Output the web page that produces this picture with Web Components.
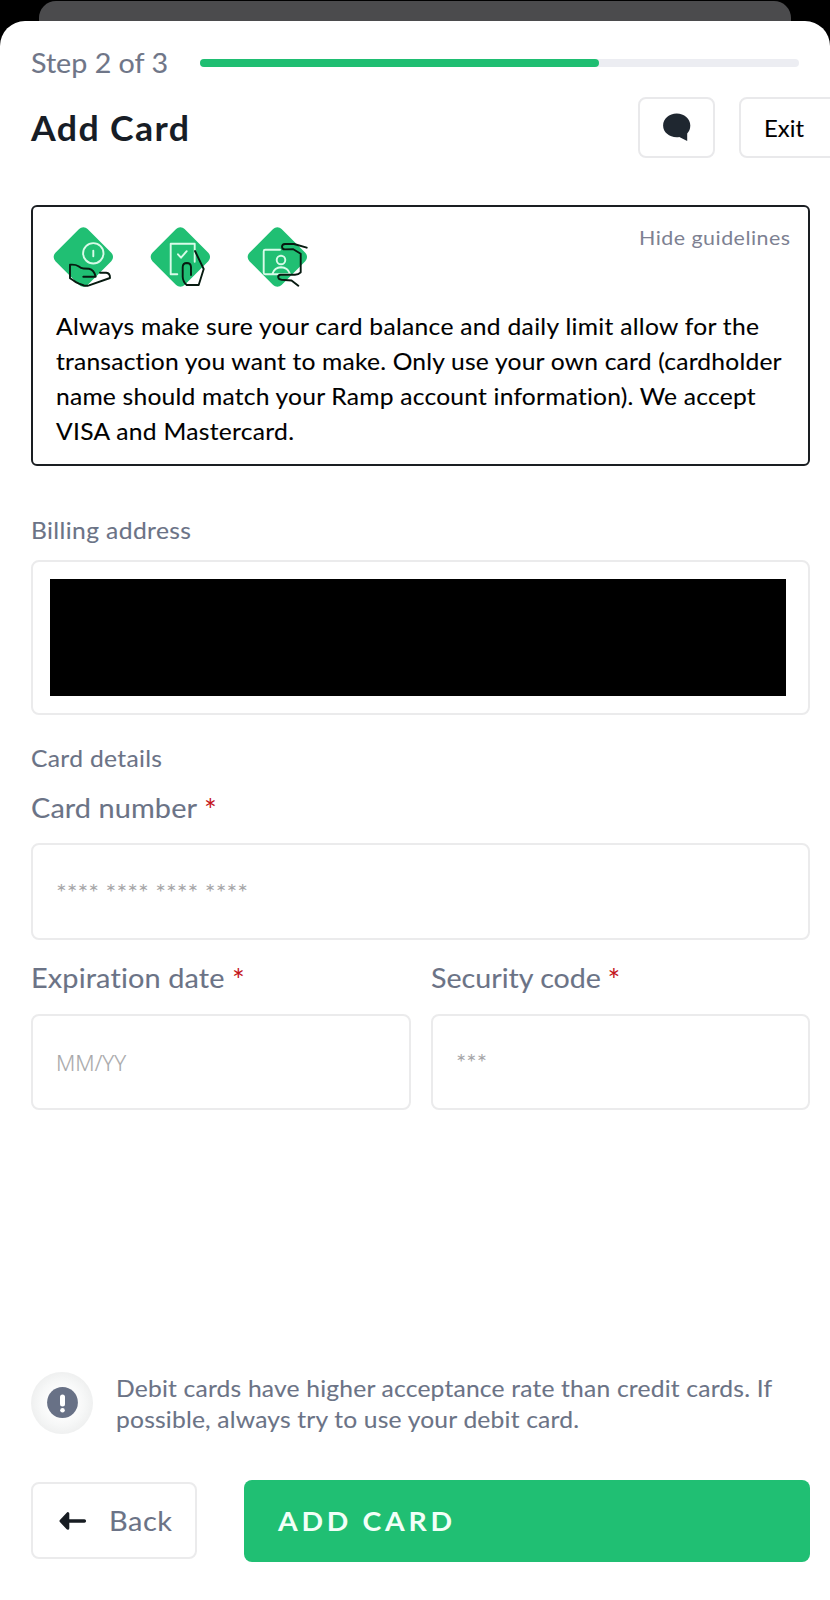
<!DOCTYPE html>
<html lang="en">
<head>
<meta charset="utf-8">
<title>Add Card</title>
<style>
  html, body { margin: 0; background: #000; }
  body { width: 830px; height: 1600px; overflow: hidden; font-family: Lato, "Open Sans", sans-serif; color: #6b7386; }
</style>
</head>
<body>
<add-card-page></add-card-page>
<script>
function define(name, html, setup) {
  customElements.define(name, class extends HTMLElement {
    constructor() {
      super();
      const t = document.createElement('template');
      t.innerHTML = html;
      this.attachShadow({ mode: 'open' }).append(t.content.cloneNode(true));
    }
    connectedCallback() { if (setup) setup(this, this.shadowRoot); }
  });
}

/* One line of text that spans the width given in "w": the letters are
   widened by up to "max" (7% by default), and tracking takes the rest. */
define('fit-text', `<style>
  :host { display: block; white-space: pre; flex: none; }
  span { display: inline-block; transform-origin: 0 50%; -webkit-text-stroke: var(--stroke, .1px) currentColor; }
</style><span><slot></slot></span>`, (el, root) => {
  const span = root.querySelector('span');
  const n = el.textContent.length - 1;
  const w = parseFloat(el.getAttribute('w'));
  const natural = span.getBoundingClientRect().width;
  const max = parseFloat(el.getAttribute('max') || '1.07');
  const scale = Math.max(1, Math.min(max, w / natural));
  const gap = (w / scale - natural) / n;
  span.style.letterSpacing = gap.toFixed(3) + 'px';
  span.style.transform = 'scaleX(' + scale.toFixed(4) + ')';
  el.style.width = w + 'px';
});

define('step-progress', `<style>
  :host { display: flex; align-items: center; height: 34px; padding-right: 11px; }
  .step { font-size: 27px; line-height: 34px; color: #6f7688; margin-right: 32px; }
  .track { flex: 1; height: 8px; border-radius: 4px; background: #ecedf2; }
  .fill { width: 66.6%; height: 8px; border-radius: 4px; background: #1fbe72; }
</style><fit-text class="step" w="137">Step 2 of 3</fit-text><div class="track"><div class="fill"></div></div>`);

define('sheet-header', `<style>
  :host { display: flex; height: 61px; margin: 16.500px -40px 0 0; }
  .title { font-size: 34px; font-weight: 700; line-height: 61px; color: #171d26; flex: 1; --stroke: 0; }
  .btn { box-sizing: border-box; height: 61px; border: 2px solid #e9e9eb; border-radius: 8px; background: #fff; display: flex; align-items: center; }
  .chat { width: 77px; margin-right: 24px; justify-content: center; }
  .exit { width: 111px; padding: 1px 0 0 23px; color: #000; font-size: 23px; }
  svg { display: block; }
</style>
<div class="title"><fit-text w="158" max="1.05">Add Card</fit-text></div>
<div class="btn chat"><svg width="30" height="30" viewBox="0 0 30 30"><path d="M14.700 1.600C7.200 1.600 1.100 6.900 1.100 13.600S7.200 25.300 14.700 25.300c1 0 1.800-.1 2.600-.3l7.900 4.100V21.600c2-2 3.100-4.700 3.100-8C28.300 6.900 22.200 1.600 14.700 1.600Z" fill="#1f2730"/></svg></div>
<div class="btn exit"><fit-text w="40">Exit</fit-text></div>`);

const diamond = '<rect x="9.100" y="9.300" width="45.500" height="45.500" rx="6" transform="rotate(45 31.850 32.050)" fill="#20bf73"/>';
const art = {
  balance: '<g stroke="#d9fbe9"><circle cx="41.800" cy="28.300" r="10.200"/><path d="M41.800 25.700v5.500"/></g><path stroke="#071a10" d="M48.500 47.700h6.200q4 .4 3.800 5.300L37.500 60.300q-2.500.8-5 .2l-5-1.800q-3.500-1.500-5.500-3.200l-3.500-2.200V39.700q5.500-.5 8.500 1.500 2.500 2.200 5 2.300l5.500.3q5 1 6.700 7.900H31.800"/>',
  check: '<path stroke="#d9fbe9" d="M28.800 49.300h-6.600V18.700h24v18M29.500 29.300l3 3.400 5.700-6.500"/><path stroke="#071a10" d="M46.500 26l8.700 18-5 16H38.200q-3.900-3.500-4-8.300V42q.2-3.900 4.100-4 4 .1 4.200 4v8"/>',
  identity: '<g stroke="#d9fbe9"><path d="M34.500 24.700H19.700q-1.500 0-1.500 1.500v21.600q0 1.500 1.500 1.500h24.800M26.800 49q2.200-6.500 8.700-6.700 6.800.2 9 6.700"/><circle cx="35.500" cy="35" r="4.300"/></g><path stroke="#071a10" d="M61.200 22.700L48.500 19h-9q-2.900.2-3 2.700.1 2.700 3 2.700l8.300-.2 7.400 4.500v18.600q-2.200 2.400-5.700 2.400H35q-2.500.3-2.300 2.500.3 2.300 3.300 2.600l10 .7 6.800 5.200"/>'
};
define('guide-icon', '<style>:host{display:block;width:64px;height:64px}svg{display:block}</style><svg width="64" height="64" viewBox="-.5 0 64 64" fill="none" stroke-width="1.900" stroke-linecap="round" stroke-linejoin="round"></svg>', (el, root) => {
  root.querySelector('svg').innerHTML = diamond + art[el.getAttribute('name')];
});

define('guidelines-box', `<style>
  :host { box-sizing: border-box; display: block; height: 261.500px; margin-top: 47px; border: 2px solid #1a1e22; border-radius: 6px; padding: 18px 18px 0; color: #000; }
  .top { display: flex; gap: 33px; }
  .hide { margin: .5px 0 0 auto; font-size: 20px; line-height: 24px; color: #7d8192; --stroke: 0; }
  .copy { margin: 20px 0 0 5px; font-size: 23px; line-height: 35px; }
</style>
<div class="top"><guide-icon name="balance"></guide-icon><guide-icon name="check"></guide-icon><guide-icon name="identity"></guide-icon><fit-text class="hide" w="151">Hide guidelines</fit-text></div>
<div class="copy">
<fit-text w="703">Always make sure your card balance and daily limit allow for the</fit-text>
<fit-text w="726">transaction you want to make. Only use your own card (cardholder</fit-text>
<fit-text w="700">name should match your Ramp account information). We accept</fit-text>
<fit-text w="238">VISA and Mastercard.</fit-text>
</div>`);

define('section-label', `<style>
  :host { display: block; font-size: 23px; line-height: 30px; }
</style><slot></slot>`);

define('address-box', `<style>
  :host { box-sizing: border-box; display: block; height: 155px; margin-top: 15.500px; border: 2px solid #ebebec; border-radius: 8px; padding: 17px 22px 17px 17px; }
  div { height: 117px; background: #000; }
</style><div></div>`);

define('card-field', `<style>
  :host { display: block; }
  .label { display: flex; height: 34px; font-size: 27px; line-height: 34px; }
  .star { color: #c4161c; margin: 1px 0 0 7px; font-size: 30px; }
  .box { box-sizing: border-box; height: 96.500px; margin-top: 18.500px; border: 2px solid #ebebec; border-radius: 8px; padding-left: 23px; display: flex; align-items: center; color: #a6a6a8; font-size: 22px; }
</style>
<div class="label"><slot name="label"></slot><span class="star">*</span></div>
<div class="box"><slot></slot></div>`);

define('debit-notice', `<style>
  :host { display: flex; margin-top: 261.500px; height: 61.500px; }
  .dot { width: 62px; height: 62px; border-radius: 50%; background: radial-gradient(circle at 50% 50%, #fdfdfd 30%, #f6f7f7 52%, #eff0f0 71%); display: flex; align-items: center; justify-content: center; margin-right: 23px; }
  .copy { font-size: 23px; line-height: 31px; padding-top: 1.500px; }
</style>
<div class="dot"><svg width="31" height="31"><circle cx="15.500" cy="15.500" r="15.400" fill="#687186"/><path d="M15.500 10v7" stroke="#fff" stroke-width="5" stroke-linecap="round"/><circle cx="15.500" cy="23.200" r="2.300" fill="#fff"/></svg></div>
<div class="copy"><fit-text w="656">Debit cards have higher acceptance rate than credit cards. If</fit-text><fit-text w="463">possible, always try to use your debit card.</fit-text></div>`);

define('action-bar', `<style>
  :host { display: flex; align-items: center; margin-top: 47px; height: 81.500px; }
  .back { box-sizing: border-box; width: 166px; height: 77px; border: 2px solid #ebebec; border-radius: 8px; padding-left: 25.500px; display: flex; align-items: center; font-size: 27px; margin-right: 47px; }
  .back svg { margin-right: 22px; }
  .add { flex: 1; height: 81.500px; border-radius: 8px; background: #20bf73; color: #f2fff8; font-size: 26.500px; font-weight: 700; display: flex; align-items: center; padding-left: 34px; --stroke: 0; }
</style>
<div class="back"><svg width="28" height="20" viewBox="0 0 28 20"><path d="M10 10h15.300" stroke="#171c22" stroke-width="3.600" stroke-linecap="round"/><path d="M8.800 2.700v14.600L2 10Z" fill="#171c22" stroke="#171c22" stroke-width="3" stroke-linejoin="round"/></svg><fit-text w="63">Back</fit-text></div>
<div class="add"><fit-text w="174">ADD CARD</fit-text></div>`);

define('add-card-page', `<style>
  :host { display: block; height: 1600px; overflow: hidden; background: #000; }
  .behind { height: 19.500px; margin: 0 39px; border-radius: 17px 17px 0 0; background: #4b4b4d; }
  .stack { padding-top: 1px; }
  .sheet { box-sizing: border-box; height: 1579.500px; padding: 25.500px 20px 0 31px; border-radius: 25px 25px 0 0; background: #fff; }
  .billing { margin-top: 48.500px; }
  .details { margin-top: 28px; }
  .number { margin-top: 17.500px; }
  .pair { display: grid; grid-template-columns: 1fr 1fr; gap: 20px; margin-top: 21.500px; }
  .stars { font-size: 24px; --stroke: 0; }
  .mm { font-family: "Open Sans", sans-serif; font-size: 21.500px; font-weight: 300; padding-top: 1px; --stroke: .2px; }
</style>
<div class="stack"><div class="behind"></div></div>
<div class="sheet">
  <step-progress></step-progress>
  <sheet-header></sheet-header>
  <guidelines-box></guidelines-box>
  <section-label class="billing"><fit-text w="160">Billing address</fit-text></section-label>
  <address-box></address-box>
  <section-label class="details"><fit-text w="131">Card details</fit-text></section-label>
  <card-field class="number"><fit-text slot="label" w="166">Card number</fit-text><fit-text class="stars" w="192">**** **** **** ****</fit-text></card-field>
  <div class="pair">
    <card-field><fit-text slot="label" w="194">Expiration date</fit-text><fit-text class="mm" w="70">MM/YY</fit-text></card-field>
    <card-field><fit-text slot="label" w="170">Security code</fit-text><fit-text class="stars" w="31">***</fit-text></card-field>
  </div>
  <debit-notice></debit-notice>
  <action-bar></action-bar>
</div>`);
</script>
</body>
</html>
